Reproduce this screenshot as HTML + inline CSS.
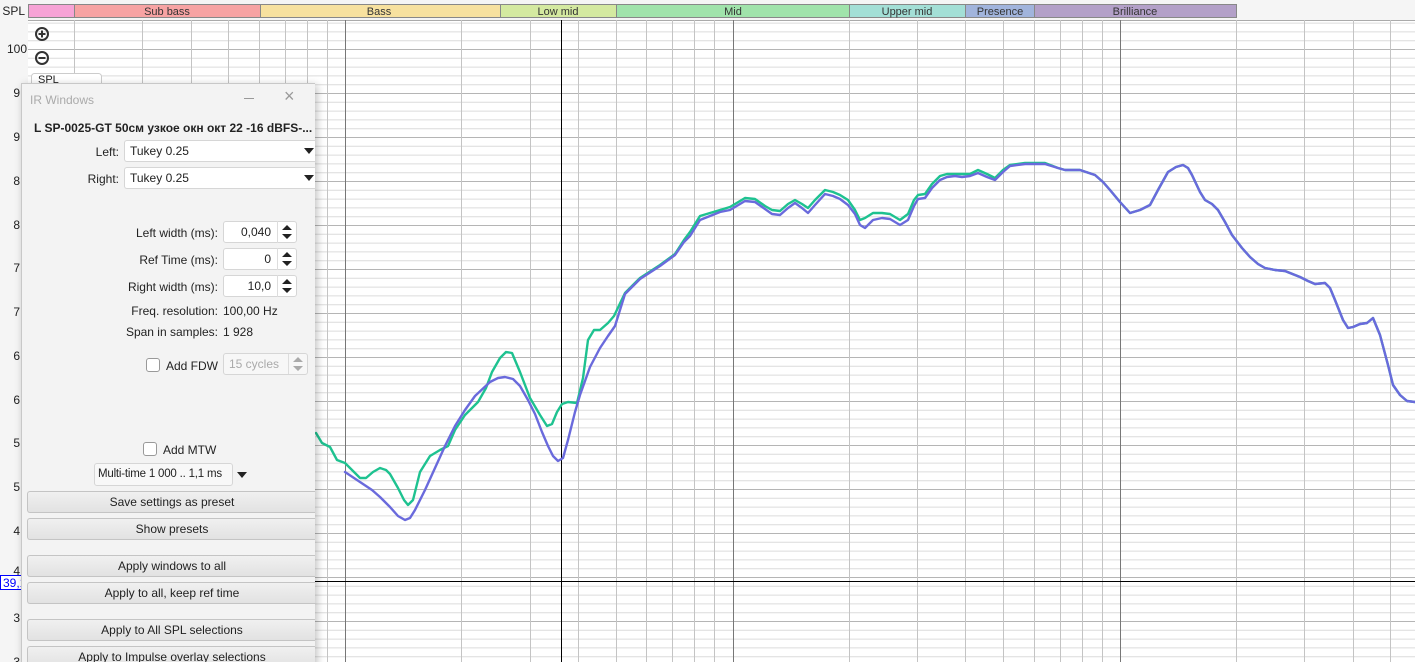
<!DOCTYPE html>
<html style="overflow:hidden;height:662px"><head><meta charset="utf-8"><style>
body{margin:0;width:1415px;height:662px;overflow:hidden;background:#f5f5f5;font-family:"Liberation Sans",sans-serif;position:relative}
.a{position:absolute}
.lbl{font-size:12px;color:#222;white-space:nowrap}
.dlg{left:21px;top:83px;width:293px;height:590px;background:#f3f3f3;border:1px solid #c8c8c8;border-right:none;box-shadow:2px 2px 8px rgba(0,0,0,.25);overflow:hidden}
.combo{background:#fff;border:1px solid #d6d6d6;border-radius:3px;font-size:12px;color:#222;box-sizing:border-box;padding:3px 5px;white-space:nowrap;overflow:hidden}
.btn{left:5px;width:289px;height:22px;background:linear-gradient(#f0f0f0,#e2e2e2);border:1px solid #c4c4c4;border-right:none;border-radius:3px 0 0 3px;box-sizing:border-box;font-size:12px;color:#222;text-align:center;line-height:20px}
.r{text-align:right}
.tri{width:0;height:0;border-left:5px solid transparent;border-right:5px solid transparent;border-top:6px solid #222}
.cb{width:12px;height:12px;border:1px solid #999;border-radius:3px;background:#fff}
</style></head><body>
<svg class="a" style="left:0;top:0" width="1415" height="662">
<defs><pattern id="h" patternUnits="userSpaceOnUse" x="0" y="49" width="1415" height="44">
<rect width="1415" height="44" fill="#fff"/>
<line x1="0" x2="1415" y1="0.5" y2="0.5" stroke="#b5b5b5"/>
<line x1="0" x2="1415" y1="9.3" y2="9.3" stroke="#dcdcdc"/>
<line x1="0" x2="1415" y1="18.1" y2="18.1" stroke="#dcdcdc"/>
<line x1="0" x2="1415" y1="26.9" y2="26.9" stroke="#dcdcdc"/>
<line x1="0" x2="1415" y1="35.7" y2="35.7" stroke="#dcdcdc"/>
</pattern></defs>
<rect x="28" y="20" width="1387" height="642" fill="url(#h)"/>
<line x1="28" x2="1415" y1="20.5" y2="20.5" stroke="#aaa"/>
<g stroke="#c4c4c4">
<line x1="74.5" x2="74.5" y1="20" y2="662"/><line x1="142.5" x2="142.5" y1="20" y2="662"/><line x1="191.5" x2="191.5" y1="20" y2="662"/><line x1="228.5" x2="228.5" y1="20" y2="662"/><line x1="259.5" x2="259.5" y1="20" y2="662"/><line x1="285.5" x2="285.5" y1="20" y2="662"/><line x1="307.5" x2="307.5" y1="20" y2="662"/><line x1="327.5" x2="327.5" y1="20" y2="662"/>
<line x1="461.5" x2="461.5" y1="20" y2="662"/><line x1="530.5" x2="530.5" y1="20" y2="662"/><line x1="578.5" x2="578.5" y1="20" y2="662"/><line x1="616.5" x2="616.5" y1="20" y2="662"/><line x1="646.5" x2="646.5" y1="20" y2="662"/><line x1="672.5" x2="672.5" y1="20" y2="662"/><line x1="694.5" x2="694.5" y1="20" y2="662"/><line x1="714.5" x2="714.5" y1="20" y2="662"/>
<line x1="849.5" x2="849.5" y1="20" y2="662"/><line x1="917.5" x2="917.5" y1="20" y2="662"/><line x1="965.5" x2="965.5" y1="20" y2="662"/><line x1="1003.5" x2="1003.5" y1="20" y2="662"/><line x1="1034.5" x2="1034.5" y1="20" y2="662"/><line x1="1060.5" x2="1060.5" y1="20" y2="662"/><line x1="1082.5" x2="1082.5" y1="20" y2="662"/><line x1="1102.5" x2="1102.5" y1="20" y2="662"/>
<line x1="1236.5" x2="1236.5" y1="20" y2="662"/><line x1="1304.5" x2="1304.5" y1="20" y2="662"/><line x1="1353.5" x2="1353.5" y1="20" y2="662"/><line x1="1390.5" x2="1390.5" y1="20" y2="662"/>
</g>
<g stroke="#777"><line x1="345.5" x2="345.5" y1="20" y2="662"/><line x1="733.5" x2="733.5" y1="20" y2="662"/><line x1="1120.5" x2="1120.5" y1="20" y2="662"/></g>
<line x1="561.5" x2="561.5" y1="20" y2="662" stroke="#000"/>
<line x1="28" x2="1415" y1="581.5" y2="581.5" stroke="#000"/>
<g font-family="Liberation Sans" font-size="11" fill="#333" text-anchor="middle">
<rect x="28.5" y="4.5" width="46" height="13" fill="#f7a3d6" stroke="#888"/>
<rect x="74.5" y="4.5" width="186" height="13" fill="#f7a3a3" stroke="#888"/><text x="167" y="15">Sub bass</text>
<rect x="260.5" y="4.5" width="240" height="13" fill="#f7e19f" stroke="#888"/><text x="379" y="15">Bass</text>
<rect x="500.5" y="4.5" width="116" height="13" fill="#d4e9a0" stroke="#888"/><text x="558" y="15">Low mid</text>
<rect x="616.5" y="4.5" width="233" height="13" fill="#a0e3ab" stroke="#888"/><text x="733" y="15">Mid</text>
<rect x="849.5" y="4.5" width="116" height="13" fill="#a3dfd6" stroke="#888"/><text x="907" y="15">Upper mid</text>
<rect x="965.5" y="4.5" width="69" height="13" fill="#a1b4dc" stroke="#888"/><text x="1000" y="15">Presence</text>
<rect x="1034.5" y="4.5" width="202" height="13" fill="#b3a0c8" stroke="#888"/><text x="1135" y="15">Brilliance</text>
</g>
<g font-family="Liberation Sans" font-size="12" fill="#222" text-anchor="end">
<text x="25" y="15">SPL</text><text x="27" y="53">100</text>
<text x="20" y="97">9</text><text x="20" y="141">9</text><text x="20" y="185">8</text><text x="20" y="229">8</text><text x="20" y="272">7</text><text x="20" y="316">7</text><text x="20" y="360">6</text><text x="20" y="404">6</text><text x="20" y="447">5</text><text x="20" y="491">5</text><text x="20" y="535">4</text><text x="20" y="575">4</text><text x="20" y="622">3</text><text x="20" y="666">3</text>
</g>
<rect x="0.5" y="575.5" width="26" height="14" fill="#fff" stroke="#00f"/>
<text x="3" y="587" font-family="Liberation Sans" font-size="12" fill="#00f">39,1</text>
<g fill="none" stroke="#333" stroke-width="2"><circle cx="42" cy="34" r="6"/><circle cx="42" cy="58" r="6"/><path d="M38.5 34h7M42 30.5v7M38.5 58h7"/></g>
<rect x="31.5" y="73.5" width="70" height="15" rx="3" fill="#fff" stroke="#ccc"/>
<g fill="none" stroke-width="2.4" stroke-linejoin="round" stroke-linecap="round">
<polyline stroke="#1ec290" points="316,433 322,443 330,447 337,460 345,463 352,470 360,478 366,478 373,472 380,468 386,470 390,474 398,488 404,500 408,505 413,500 420,472 430,456 440,450 448,446 455,430 465,415 478,402 486,388 492,372 500,358 506,352 512,353 520,372 530,398 540,415 547,426 552,424 557,412 562,404 568,402 577,403 583,378 588,340 594,330 600,330 608,323 614,316 625,293 640,278 660,265 675,254 684,240 690,232 700,216 710,213 720,210 730,207 745,198 755,199 765,206 772,210 780,211 788,204 795,200 802,204 808,208 815,200 825,190 833,192 840,195 848,200 855,210 860,220 865,218 873,213 882,213 890,214 900,220 908,214 914,200 918,195 925,194 932,184 940,176 947,174 955,174 962,174 970,174 978,170 987,174 995,178 1003,170 1010,165 1025,163 1045,163 1058,168 1065,170 1080,170 1095,175 1103,182 1110,190 1120,202 1130,213 1140,210 1150,205 1158,190 1168,172 1176,167 1183,165 1188,168 1192,175 1200,192 1205,200 1212,204 1218,210 1225,222 1232,235 1242,248 1250,257 1258,264 1265,268 1275,270 1285,271 1300,277 1308,281 1315,284 1325,283 1330,288 1335,300 1343,320 1348,328 1353,327 1360,324 1367,323 1373,318 1380,335 1388,365 1393,385 1400,395 1407,401 1415,402"/>
<polyline stroke="#6a6adc" points="345,472 360,482 372,490 380,497 390,507 398,516 405,520 410,518 415,510 425,490 435,468 445,446 455,426 465,410 475,396 490,382 498,378 505,377 513,379 520,386 528,400 535,414 542,432 548,446 553,456 558,461 563,458 568,440 575,412 580,395 590,367 600,348 608,336 615,326 625,294 640,279 660,266 675,255 684,242 690,236 700,220 710,216 720,212 730,210 745,201 755,202 765,209 772,214 780,215 788,208 795,203 802,208 808,213 815,205 825,194 833,196 840,199 848,205 855,214 860,225 865,228 873,220 882,218 890,219 900,225 908,220 914,206 918,199 925,198 932,188 940,180 947,177 955,176 962,177 970,176 978,173 987,177 995,180 1003,172 1010,166 1025,164 1045,164 1058,168 1065,170 1080,170 1095,175 1103,182 1110,190 1120,202 1130,213 1140,210 1150,205 1158,190 1168,172 1176,167 1183,165 1188,168 1192,175 1200,192 1205,200 1212,204 1218,210 1225,222 1232,235 1242,248 1250,257 1258,264 1265,268 1275,270 1285,271 1300,277 1308,281 1315,284 1325,283 1330,288 1335,300 1343,320 1348,328 1353,327 1360,324 1367,323 1373,318 1380,335 1388,365 1393,385 1400,395 1407,401 1415,402"/>
</g>
</svg>

<div class="a dlg">
<div class="a" style="left:8px;top:9px;font-size:12px;color:#aaa">IR Windows</div>
<div class="a" style="left:222px;top:14px;width:10px;height:1px;background:#999"></div>
<div class="a" style="left:262px;top:2px;font-size:18px;color:#999">×</div>
<div class="a" style="left:12px;top:37px;font-size:12px;font-weight:bold;color:#222;white-space:nowrap">L SP-0025-GT 50см узкое окн окт 22 -16 dBFS-...</div>
<div class="a lbl r" style="left:0;width:97px;top:61px">Left:</div>
<div class="a combo" style="left:102px;top:56px;width:194px;height:22px;border-right:none">Tukey 0.25</div><div class="a tri" style="left:282px;top:64px"></div>
<div class="a lbl r" style="left:0;width:97px;top:88px">Right:</div>
<div class="a combo" style="left:102px;top:83px;width:194px;height:22px;border-right:none">Tukey 0.25</div><div class="a tri" style="left:282px;top:91px"></div>

<div class="a lbl r" style="left:0;width:196px;top:142px">Left width (ms):</div>
<div class="a combo r" style="left:201px;top:137px;width:74px;height:22px;padding-right:25px">0,040</div>
<div class="a lbl r" style="left:0;width:196px;top:169px">Ref Time (ms):</div>
<div class="a combo r" style="left:201px;top:164px;width:74px;height:22px;padding-right:25px">0</div>
<div class="a lbl r" style="left:0;width:196px;top:196px">Right width (ms):</div>
<div class="a combo r" style="left:201px;top:191px;width:74px;height:22px;padding-right:25px">10,0</div>
<svg class="a" style="left:255px;top:137px" width="20" height="80"><g fill="#222"><path d="M5 9l5-5 5 5zM5 13l5 5 5-5z"/><path d="M5 36l5-5 5 5zM5 40l5 5 5-5z"/><path d="M5 63l5-5 5 5zM5 67l5 5 5-5z"/></g><g stroke="#ddd"><line x1="0.5" x2="0.5" y1="0" y2="22"/><line x1="0.5" x2="0.5" y1="27" y2="49"/><line x1="0.5" x2="0.5" y1="54" y2="76"/></g></svg>
<div class="a lbl r" style="left:0;width:196px;top:220px">Freq. resolution:</div><div class="a lbl" style="left:201px;top:220px">100,00 Hz</div>
<div class="a lbl r" style="left:0;width:196px;top:241px">Span in samples:</div><div class="a lbl" style="left:201px;top:241px">1 928</div>
<div class="a cb" style="left:124px;top:274px"></div><div class="a lbl" style="left:144px;top:275px">Add FDW</div>
<div class="a combo" style="left:201px;top:269px;width:85px;height:22px;color:#aaa;background:#f7f7f7">15 cycles</div>
<svg class="a" style="left:266px;top:269px" width="20" height="22"><line x1="0.5" x2="0.5" y1="1" y2="21" stroke="#ddd"/><path d="M5 9l5-5 5 5zM5 13l5 5 5-5z" fill="#aaa"/></svg>
<div class="a cb" style="left:121px;top:358px"></div><div class="a lbl" style="left:141px;top:359px">Add MTW</div>
<div class="a combo" style="left:72px;top:379px;width:139px;height:23px;background:#f8f8f8;padding:4px 3px;font-size:11.5px;letter-spacing:-0.2px">Multi-time 1 000 .. 1,1 ms</div><div class="a tri" style="left:215px;top:388px"></div>
<div class="a btn" style="top:407px">Save settings as preset</div>
<div class="a btn" style="top:434px">Show presets</div>
<div class="a btn" style="top:471px">Apply windows to all</div>
<div class="a btn" style="top:498px">Apply to all, keep ref time</div>
<div class="a btn" style="top:535px">Apply to All SPL selections</div>
<div class="a btn" style="top:562px">Apply to Impulse overlay selections</div>
</div>
<div class="a lbl" style="left:38px;top:74px;font-size:11px">SPL</div>
</body></html>
